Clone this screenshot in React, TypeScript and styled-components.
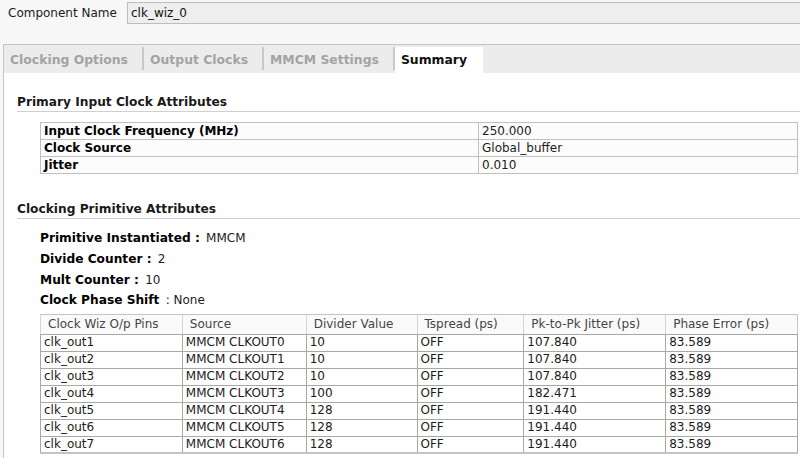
import React from "react";
import styled, { createGlobalStyle } from "styled-components";

const Global = createGlobalStyle`
  html, body { margin: 0; padding: 0; }
  body {
    background: #f7f7f7;
    font-family: "DejaVu Sans", "Liberation Sans", sans-serif;
    font-size: 12px;
    color: #000;
  }
`;

const Page = styled.div`
  width: 800px;
  height: 458px;
  overflow: hidden;
  display: flex;
  flex-direction: column;
  background: #f7f7f7;
`;

const NameRow = styled.div`
  display: flex;
  align-items: center;
  height: 22px;
  margin-top: 2px;
  padding-left: 8px;
  gap: 7px;
`;

const NameLabel = styled.span`
  width: 112px;
  font-size: 12px;
  color: #1a1a1a;
`;

const NameInput = styled.div`
  flex: 1;
  box-sizing: border-box;
  height: 22px;
  border: 1px solid #bdbdbd;
  border-right: none;
  background: #eeeeee;
  display: flex;
  align-items: center;
  padding-left: 3px;
  font-size: 12px;
  color: #111;
`;

const TabPanel = styled.div`
  margin-top: 20px;
  margin-left: 3px;
  flex: 1;
  display: flex;
  flex-direction: column;
  border-top: 1px solid #c4c4c4;
  border-left: 1px solid #c4c4c4;
  background: #fff;
`;

const TabBar = styled.div`
  height: 28px;
  display: flex;
  align-items: flex-end;
  background: #ececec;
`;

const Tab = styled.div<{ $active?: boolean }>`
  height: 26px;
  box-sizing: border-box;
  display: flex;
  align-items: center;
  padding: 0 16px 2px 6px;
  font-size: 12.4px;
  font-weight: bold;
  color: ${(p) => (p.$active ? "#111" : "#a3a3a3")};
  background: ${(p) => (p.$active ? "#fff" : "transparent")};
  position: relative;
  &:not(:last-child)::after {
    content: "";
    position: absolute;
    right: 0;
    top: 0;
    bottom: 3px;
    width: 2px;
    background: #c8c8c8;
  }
`;

const Content = styled.div`
  flex: 1;
  padding-left: 13px;
  display: flex;
  flex-direction: column;
`;

const SectionTitle = styled.div<{ $top: number }>`
  margin-top: ${(p) => p.$top}px;
  height: 20px;
  display: flex;
  align-items: center;
  border-bottom: 1px solid #cfcfcf;
  font-weight: bold;
  font-size: 12.2px;
  color: #1a1a1a;
  box-sizing: border-box;
`;

const Indented = styled.div`
  padding-left: 23px;
  padding-right: 2px;
`;

const AttrTable = styled.table`
  margin-top: 10px;
  width: 100%;
  border-collapse: collapse;
  background: #fcfcfc;
  tr {
    height: 17px;
  }
  td {
    border: 1px solid #c0c0c0;
    padding: 0 3px;
    font-size: 12px;
    line-height: 15px;
    white-space: nowrap;
    color: #1c1c1c;
  }
  td:first-child {
    width: 431px;
    font-weight: bold;
    color: #000;
  }
`;

const PropList = styled.div`
  margin-top: 9px;
  display: flex;
  flex-direction: column;
`;

const PropLine = styled.div`
  height: 20.7px;
  display: flex;
  align-items: center;
  font-size: 12px;
  color: #1c1c1c;
`;

const PropKey = styled.b`
  font-weight: bold;
  font-size: 12.2px;
  color: #000;
  white-space: pre;
  margin-right: 2px;
`;

const ClockTable = styled.table`
  margin-top: 3px;
  width: 100%;
  border-collapse: collapse;
  border: 1px solid #c4c4c4;
  border-bottom: 2px solid #c4c4c4;
  thead tr {
    height: 20px;
  }
  tbody tr {
    height: 17px;
  }
  th {
    font-weight: normal;
    text-align: left;
    color: #444;
    padding: 0 7px;
    border-left: 1px solid #d4d4d4;
    border-bottom: 1px solid #a8a8a8;
    background: #fafafa;
    font-size: 12px;
    white-space: nowrap;
  }
  td {
    padding: 0 3px;
    border: 1px solid #a8a8a8;
    font-size: 12px;
    line-height: 15px;
    white-space: nowrap;
    background: #fff;
    color: #1c1c1c;
  }
`;

const colWidths = [142, 124, 111, 107, 142, 132];
const headers = [
  "Clock Wiz O/p Pins",
  "Source",
  "Divider Value",
  "Tspread (ps)",
  "Pk-to-Pk Jitter (ps)",
  "Phase Error (ps)",
];

const rows = [
  ["clk_out1", "MMCM CLKOUT0", "10", "OFF", "107.840", "83.589"],
  ["clk_out2", "MMCM CLKOUT1", "10", "OFF", "107.840", "83.589"],
  ["clk_out3", "MMCM CLKOUT2", "10", "OFF", "107.840", "83.589"],
  ["clk_out4", "MMCM CLKOUT3", "100", "OFF", "182.471", "83.589"],
  ["clk_out5", "MMCM CLKOUT4", "128", "OFF", "191.440", "83.589"],
  ["clk_out6", "MMCM CLKOUT5", "128", "OFF", "191.440", "83.589"],
  ["clk_out7", "MMCM CLKOUT6", "128", "OFF", "191.440", "83.589"],
];

export default function App() {
  return (
    <Page>
      <Global />
      <NameRow>
        <NameLabel>Component Name</NameLabel>
        <NameInput>clk_wiz_0</NameInput>
      </NameRow>
      <TabPanel>
        <TabBar>
          <Tab>Clocking Options</Tab>
          <Tab>Output Clocks</Tab>
          <Tab>MMCM Settings</Tab>
          <Tab $active>Summary</Tab>
        </TabBar>
        <Content>
          <SectionTitle $top={19}>Primary Input Clock Attributes</SectionTitle>
          <Indented>
            <AttrTable>
              <tbody>
                <tr>
                  <td>Input Clock Frequency (MHz)</td>
                  <td>250.000</td>
                </tr>
                <tr>
                  <td>Clock Source</td>
                  <td>Global_buffer</td>
                </tr>
                <tr>
                  <td>Jitter</td>
                  <td>0.010</td>
                </tr>
              </tbody>
            </AttrTable>
          </Indented>
          <SectionTitle $top={25}>Clocking Primitive Attributes</SectionTitle>
          <Indented>
            <PropList>
              <PropLine>
                <PropKey>Primitive Instantiated : </PropKey>MMCM
              </PropLine>
              <PropLine>
                <PropKey>Divide Counter : </PropKey>2
              </PropLine>
              <PropLine>
                <PropKey>Mult Counter : </PropKey>10
              </PropLine>
              <PropLine>
                <PropKey>Clock Phase Shift </PropKey>: None
              </PropLine>
            </PropList>
            <ClockTable>
              <colgroup>
                {colWidths.map((w, i) => (
                  <col key={i} style={{ width: w }} />
                ))}
              </colgroup>
              <thead>
                <tr>
                  {headers.map((h) => (
                    <th key={h}>{h}</th>
                  ))}
                </tr>
              </thead>
              <tbody>
                {rows.map((r) => (
                  <tr key={r[0]}>
                    {r.map((c, i) => (
                      <td key={i}>{c}</td>
                    ))}
                  </tr>
                ))}
              </tbody>
            </ClockTable>
          </Indented>
        </Content>
      </TabPanel>
    </Page>
  );
}
